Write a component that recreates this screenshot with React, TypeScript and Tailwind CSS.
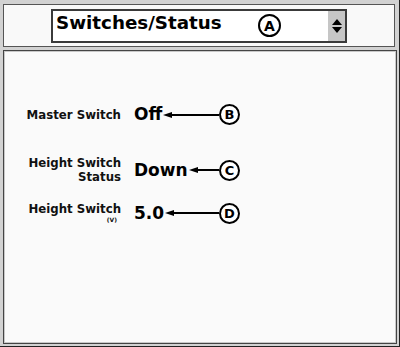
import React from "react";

const font = { fontFamily: '"DejaVu Sans", Verdana, sans-serif' };

function Badge({ letter, big }: { letter: string; big?: boolean }) {
  return (
    <div
      className={
        big
          ? "flex h-[23px] w-[23px] shrink-0 items-center justify-center rounded-full border-2 border-black bg-white text-[14px] font-bold leading-none text-black"
          : "flex h-[21px] w-[21px] shrink-0 items-center justify-center rounded-full border-2 border-black bg-white text-[13px] font-bold leading-none text-black"
      }
    >
      {letter}
    </div>
  );
}

function Value({ text, letter }: { text: string; letter: string }) {
  return (
    <div className="flex w-[106px] items-center">
      <span className="text-[17px] font-bold leading-[21px] text-black">{text}</span>
      <div className="ml-[1px] flex flex-1 items-center">
        <div className="h-0 w-0 border-y-[3.5px] border-r-[9px] border-y-transparent border-r-black" />
        <div className="h-[2px] flex-1 bg-black" />
      </div>
      <Badge letter={letter} />
    </div>
  );
}

export default function App() {
  return (
    <div
      className="flex h-[347px] w-[400px] flex-col border-b border-r border-[#222] bg-[#d2d2d2] pl-[3px] pt-[4px]"
      style={font}
    >
      <div className="flex h-[43px] w-[392px] items-center border border-[#555] bg-[#f9f9f9] pl-[47px]">
        <div className="flex h-[34px] w-[296px] items-center border-2 border-[#3a3a3a] bg-white">
          <span className="w-[205px] pb-[5px] pl-[3px] text-[18.3px] font-bold leading-[24px] text-black">
            Switches/Status
          </span>
          <Badge letter="A" big />
          <div className="flex-1" />
          <div className="flex h-full w-[17px] flex-col items-center justify-center gap-[2px] bg-[#c6c6c6]">
            <div className="h-0 w-0 border-x-[5.5px] border-b-[6px] border-x-transparent border-b-black" />
            <div className="h-0 w-0 border-x-[5.5px] border-t-[6px] border-x-transparent border-t-black" />
          </div>
        </div>
      </div>
      <div className="mt-[3px] flex h-[294px] w-[394px] flex-col border border-[#444] bg-[#fafafa] pt-[53px] shadow-[inset_1px_1px_0_#c8c8c8,inset_-1px_-1px_0_#c8c8c8]">
        <div className="grid grid-cols-[117px_106px] items-center gap-x-[13px]">
          <div className="text-right text-[11.75px] font-bold leading-[14px] text-[#111]">Master Switch</div>
          <Value text="Off" letter="B" />
        </div>
        <div className="mt-[31px] grid grid-cols-[117px_106px] items-center gap-x-[13px]">
          <div className="text-right text-[11.75px] font-bold leading-[14px] text-[#111]">
            <div>Height Switch</div>
            <div>Status</div>
          </div>
          <Value text="Down" letter="C" />
        </div>
        <div className="mt-[18px] grid grid-cols-[117px_106px] items-center gap-x-[13px]">
          <div className="text-right font-bold text-[#111]">
            <div className="text-[11.75px] leading-[14px]">Height Switch</div>
            <div className="pr-[4px] text-[6px] leading-[8px]">(V)</div>
          </div>
          <Value text="5.0" letter="D" />
        </div>
      </div>
    </div>
  );
}
